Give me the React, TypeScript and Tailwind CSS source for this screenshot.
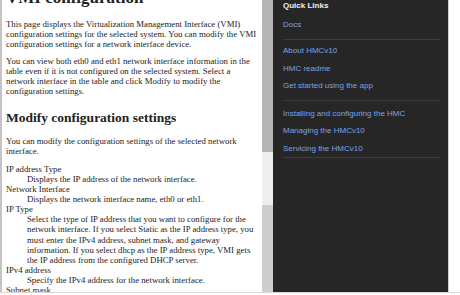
import React from 'react';

const serif = { fontFamily: '"Liberation Serif", "Times New Roman", serif' };
const sans = { fontFamily: '"Liberation Sans", Arial, sans-serif' };

const Line: React.FC<{ children: React.ReactNode; indent?: boolean }> = ({ children, indent }) => (
  <div className={`h-[10.1px] leading-[10.1px] whitespace-nowrap ${indent ? 'pl-[21px]' : ''}`}>{children}</div>
);

const QuickLink: React.FC<{ label: string; className?: string }> = ({ label, className }) => (
  <a className={`block h-[10px] leading-[10px] text-[8px] text-[#7ea2e6] whitespace-nowrap ${className ?? ''}`}>{label}</a>
);

const Divider: React.FC<{ className?: string }> = ({ className }) => (
  <div className={`h-px bg-[#3d3d3d] ${className ?? ''}`} />
);

export default function App() {
  return (
    <div className="w-[460px] h-[295px] overflow-hidden bg-white flex flex-col">
      <div className="flex h-[292px]">
        {/* Help content */}
        <div className="w-[262px] border-l-2 border-[#c4c4c4] pl-[4px] overflow-hidden text-[#222] text-[8.75px]" style={serif}>
          <h1 className="-mt-[12px] h-[20px] leading-[20px] text-[17px] font-bold whitespace-nowrap">VMI configuration</h1>
          <div className="mt-[11px]">
            <Line>This page displays the Virtualization Management Interface (VMI)</Line>
            <Line>configuration settings for the selected system. You can modify the VMI</Line>
            <Line>configuration settings for a network interface device.</Line>
          </div>
          <div className="mt-[6.4px]">
            <Line>You can view both eth0 and eth1 network interface information in the</Line>
            <Line>table even if it is not configured on the selected system. Select a</Line>
            <Line>network interface in the table and click Modify to modify the</Line>
            <Line>configuration settings.</Line>
          </div>
          <h2 className="mt-[14.4px] h-[15px] leading-[15px] text-[13.5px] font-bold whitespace-nowrap">Modify configuration settings</h2>
          <div className="mt-[10.5px]">
            <Line>You can modify the configuration settings of the selected network</Line>
            <Line>interface.</Line>
          </div>
          <dl className="mt-[7.8px]">
            <dt><Line>IP address Type</Line></dt>
            <dd><Line indent>Displays the IP address of the network interface.</Line></dd>
            <dt><Line>Network Interface</Line></dt>
            <dd><Line indent>Displays the network interface name, eth0 or eth1.</Line></dd>
            <dt><Line>IP Type</Line></dt>
            <dd>
              <Line indent>Select the type of IP address that you want to configure for the</Line>
              <Line indent>network interface. If you select Static as the IP address type, you</Line>
              <Line indent>must enter the IPv4 address, subnet mask, and gateway</Line>
              <Line indent>information. If you select dhcp as the IP address type, VMI gets</Line>
              <Line indent>the IP address from the configured DHCP server.</Line>
            </dd>
            <dt><Line>IPv4 address</Line></dt>
            <dd><Line indent>Specify the IPv4 address for the network interface.</Line></dd>
            <dt><Line>Subnet mask</Line></dt>
          </dl>
        </div>

        {/* Scrollbar */}
        <div className="w-[11px] flex flex-col">
          <div className="h-[152px] bg-[#b4b4b4]" />
          <div className="h-[53px] bg-[#efefef]" />
          <div className="flex-1 bg-[#cdcdcd]" />
        </div>

        {/* Quick links panel */}
        <div className="w-[175px] bg-[#262626] pl-[10px] pr-[8px] flex flex-col" style={sans}>
          <div className="mt-px h-[10px] leading-[10px] text-[8px] font-semibold text-[#f0f0f0]">Quick Links</div>
          <QuickLink label="Docs" className="mt-[9px]" />
          <Divider className="mt-[9px]" />
          <QuickLink label="About HMCv10" className="mt-[6px]" />
          <QuickLink label="HMC readme" className="mt-[8px]" />
          <QuickLink label="Get started using the app" className="mt-[7px]" />
          <Divider className="mt-[9px]" />
          <QuickLink label="Installing and configuring the HMC" className="mt-[7.5px]" />
          <QuickLink label="Managing the HMCv10" className="mt-[7.5px]" />
          <QuickLink label="Servicing the HMCv10" className="mt-[7.5px]" />
          <Divider className="mt-[3px]" />
        </div>

        <div className="flex-1 border-l border-[#cfcfcf] bg-white" />
      </div>
      <div className="flex-1 border-t border-[#d6d6d6] bg-white" />
    </div>
  );
}
